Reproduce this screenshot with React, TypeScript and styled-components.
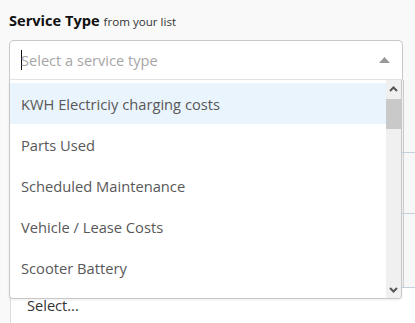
import React from "react";
import styled, { createGlobalStyle } from "styled-components";

const GlobalStyle = createGlobalStyle`
  html, body { margin: 0; padding: 0; }
  body {
    background: #f9f9f9;
    font-family: "Open Sans", "Noto Sans", sans-serif;
    overflow: hidden;
    width: 415px;
    height: 323px;
  }
`;

const Page = styled.div`
  padding: 10px 0 0 9px;
`;

const Label = styled.div`
  display: flex;
  align-items: baseline;
  gap: 4px;
  height: 21px;
  margin-bottom: 9px;
  color: #111;
`;

const LabelMain = styled.span`
  font-size: 14.6px;
  font-weight: 700;
`;

const LabelHint = styled.span`
  font-size: 11.6px;
  color: #333;
`;

const Field = styled.div`
  position: relative;
  width: 394px;
  z-index: 2;
`;

const Input = styled.div`
  box-sizing: border-box;
  height: 40px;
  background: #fff;
  border: 1px solid #c8c8c8;
  border-bottom-color: #e4e4e4;
  border-radius: 5px 5px 0 0;
  display: flex;
  align-items: center;
  padding: 0 12px 0 11px;
`;

const Caret = styled.span`
  display: inline-block;
  width: 1px;
  height: 20px;
  background: #111;
  margin-right: -1px;
`;

const Placeholder = styled.span`
  flex: 1;
  font-size: 14.6px;
  color: #a6a6a6;
`;

const Menu = styled.div`
  position: absolute;
  top: 100%;
  left: 0;
  box-sizing: border-box;
  width: 393px;
  height: 219px;
  background: #fff;
  border: 1px solid #c8c8c8;
  border-top: none;
  border-radius: 0 0 4px 4px;
  box-shadow: 0 1px 3px rgba(0, 0, 0, 0.08);
  display: flex;
  overflow: hidden;
`;

const List = styled.ul`
  list-style: none;
  margin: 0;
  padding: 3px 0 0;
  flex: 1;
  overflow: hidden;
`;

const Item = styled.li<{ $active?: boolean }>`
  height: 41px;
  display: flex;
  align-items: center;
  padding-left: 11px;
  font-size: 14.7px;
  color: #585858;
  background: ${(p) => (p.$active ? "#eaf4fd" : "transparent")};
`;

const Scrollbar = styled.div`
  width: 15px;
  background: #f0f0f0;
  display: flex;
  flex-direction: column;
`;

const ScrollButton = styled.div`
  height: 17px;
  display: flex;
  align-items: center;
  justify-content: center;
`;

const Track = styled.div`
  flex: 1;
  padding-top: 2px;
`;

const Thumb = styled.div`
  height: 30px;
  background: #c9c9c9;
`;

const Below = styled.div`
  margin-left: 1px;
  border-left: 1px solid #dcdcdc;
`;

const Row = styled.div<{ $h: number; $white?: boolean }>`
  display: grid;
  grid-template-columns: 393px 1fr;
  height: ${(p) => p.$h}px;
  border-bottom: 1px solid ${(p) => (p.$white ? "transparent" : "#c3d2dc")};
  background: ${(p) => (p.$white ? "#fff" : "#f7f7f7")};
`;

const Cell = styled.div<{ $edge?: boolean }>`
  border-right: ${(p) => (p.$edge ? "1px solid #cfcfcf" : "none")};
  display: flex;
  align-items: center;
  padding-left: 16px;
  font-size: 14.6px;
  color: #333;
`;

const Chevron = ({ up }: { up?: boolean }) => (
  <svg width="9" height="6" viewBox="0 0 9 6">
    <path
      d={up ? "M1 5 L4.5 1.5 L8 5" : "M1 1 L4.5 4.5 L8 1"}
      fill="none"
      stroke="#555"
      strokeWidth="2"
    />
  </svg>
);

const items = [
  "KWH Electriciy charging costs",
  "Parts Used",
  "Scheduled Maintenance",
  "Vehicle / Lease Costs",
  "Scooter Battery",
];

export default function App() {
  return (
    <>
      <GlobalStyle />
      <Page>
        <Label>
          <LabelMain>Service Type</LabelMain>
          <LabelHint>from your list</LabelHint>
        </Label>
        <Field>
          <Input>
            <Caret />
            <Placeholder>Select a service type</Placeholder>
            <svg width="11" height="6" viewBox="0 0 11 6">
              <path d="M0 6 L5.5 0 L11 6 Z" fill="#999" />
            </svg>
          </Input>
          <Menu>
            <List>
              {items.map((t, i) => (
                <Item key={t} $active={i === 0}>
                  {t}
                </Item>
              ))}
            </List>
            <Scrollbar>
              <ScrollButton>
                <Chevron up />
              </ScrollButton>
              <Track>
                <Thumb />
              </Track>
              <ScrollButton>
                <Chevron />
              </ScrollButton>
            </Scrollbar>
          </Menu>
        </Field>
        <Below>
          <Row $h={72}>
            <Cell $edge />
            <Cell />
          </Row>
          <Row $h={60}>
            <Cell $edge />
            <Cell />
          </Row>
          <Row $h={73}>
            <Cell $edge />
            <Cell />
          </Row>
          <Row $h={34} $white>
            <Cell>Select...</Cell>
            <Cell />
          </Row>
        </Below>
      </Page>
    </>
  );
}
